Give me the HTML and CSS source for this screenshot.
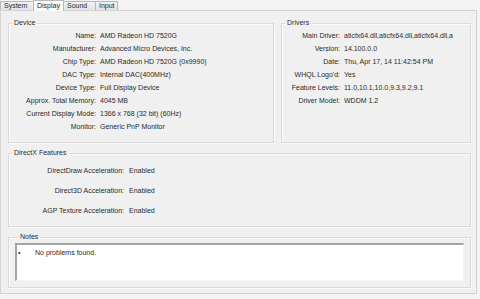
FILE: index.html
```html
<!DOCTYPE html>
<html>
<head>
<meta charset="utf-8">
<link rel="stylesheet" href="styles.css">
</head>
<body>
<div class="tabs">
  <div class="tab">System</div>
  <div class="tab active">Display</div>
  <div class="tab">Sound</div>
  <div class="tab">Input</div>
</div>
<div class="panel">
  <div class="top">
    <fieldset class="group device">
      <legend>Device</legend>
      <div class="rows">
        <span class="k">Name:</span><span class="v">AMD Radeon HD 7520G</span>
        <span class="k">Manufacturer:</span><span class="v">Advanced Micro Devices, Inc.</span>
        <span class="k">Chip Type:</span><span class="v">AMD Radeon HD 7520G (0x9990)</span>
        <span class="k">DAC Type:</span><span class="v">Internal DAC(400MHz)</span>
        <span class="k">Device Type:</span><span class="v">Full Display Device</span>
        <span class="k">Approx. Total Memory:</span><span class="v">4045 MB</span>
        <span class="k">Current Display Mode:</span><span class="v">1366 x 768 (32 bit) (60Hz)</span>
        <span class="k">Monitor:</span><span class="v">Generic PnP Monitor</span>
      </div>
    </fieldset>
    <fieldset class="group drivers">
      <legend>Drivers</legend>
      <div class="rows">
        <span class="k">Main Driver:</span><span class="v">aticfx64.dll,aticfx64.dll,aticfx64.dll,a</span>
        <span class="k">Version:</span><span class="v">14.100.0.0</span>
        <span class="k">Date:</span><span class="v">Thu, Apr 17, 14 11:42:54 PM</span>
        <span class="k">WHQL Logo'd:</span><span class="v">Yes</span>
        <span class="k">Feature Levels:</span><span class="v">11.0,10.1,10.0,9.3,9.2,9.1</span>
        <span class="k">Driver Model:</span><span class="v">WDDM 1.2</span>
      </div>
    </fieldset>
  </div>
  <fieldset class="group dx">
    <legend>DirectX Features</legend>
    <div class="rows">
      <span class="k">DirectDraw Acceleration:</span><span class="v">Enabled</span>
      <span class="k">Direct3D Acceleration:</span><span class="v">Enabled</span>
      <span class="k">AGP Texture Acceleration:</span><span class="v">Enabled</span>
    </div>
  </fieldset>
  <fieldset class="group notes">
    <legend>Notes</legend>
    <div class="notebox">
      <div class="note"><span class="bullet">&bull;</span><span>No problems found.</span></div>
    </div>
  </fieldset>
</div>
</body>
</html>
```
FILE: styles.css
```css
html, body {
  margin: 0;
  padding: 0;
}
body {
  width: 480px;
  height: 299px;
  overflow: hidden;
  background: #f3f3f3;
  font-family: "Liberation Sans", Arial, sans-serif;
  font-size: 7px;
  color: #2a2a2a;
}
.tabs {
  display: flex;
  align-items: flex-end;
  height: 10px;
}
.tab {
  height: 9px;
  line-height: 8px;
  padding: 0 3px;
  border: 1px solid #b9b9b9;
  border-bottom: none;
  border-right: none;
  background: linear-gradient(#f2f2f2, #e3e3e3);
  box-sizing: border-box;
}
.tab:nth-child(1) { width: 33px; }
.tab:nth-child(3) { width: 31px; }
.tab:nth-child(4) { width: 23px; border-right: 1px solid #b9b9b9; }
.tab.active {
  width: 31px;
  height: 11px;
  line-height: 10px;
  margin-bottom: -1px;
  background: #fbfbfb;
  position: relative;
  z-index: 1;
  border-right: 1px solid #b9b9b9;
  padding: 0 3px;
}
.tab.active + .tab { border-left: none; }
.panel {
  width: 477px;
  height: 284px;
  box-sizing: border-box;
  border: 1px solid #d3d3d3;
  background: #f0f0f0;
  padding: 8px 5px 0 7px;
  display: flex;
  flex-direction: column;
}
.top {
  display: flex;
  gap: 7px;
}
.group {
  margin: 0;
  padding: 0;
  border: 1px solid #dadada;
  box-shadow: inset 1px 1px 0 #fafafa, 1px 1px 0 #fafafa;
  min-width: 0;
}
.group legend {
  font-size: 7px;
  line-height: 8px;
  padding: 0 2px;
  margin-left: 3px;
}
.rows {
  display: grid;
  grid-auto-rows: 13px;
  line-height: 13px;
  column-gap: 4px;
  white-space: nowrap;
}
.k { text-align: right; }
.v { overflow: hidden; }
.device {
  width: 266px;
  box-sizing: border-box;
  padding: 2px 0 9px;
}
.device .rows { grid-template-columns: 87px 1fr; }
.drivers {
  flex: 1;
  padding: 2px 4px 0 0;
}
.drivers .rows { grid-template-columns: 58px 1fr; }
.dx {
  margin-top: 6px;
  padding: 4px 0 5px;
}
.dx .rows {
  grid-template-columns: 115px 1fr;
  grid-auto-rows: 20px;
  line-height: 20px;
  column-gap: 5px;
}
.notes {
  margin-top: 6px;
  padding: 2px 6px 6px;
}
.notebox {
  height: 38px;
  box-sizing: border-box;
  background: #fff;
  border-top: 2px solid #a3a3a3;
  border-left: 2px solid #a3a3a3;
  border-right: 1px solid #f4f4f4;
  border-bottom: 1px solid #f4f4f4;
  padding: 3px 0 0 1px;
}
.note {
  display: flex;
  line-height: 9px;
}
.bullet {
  width: 17px;
}
```
